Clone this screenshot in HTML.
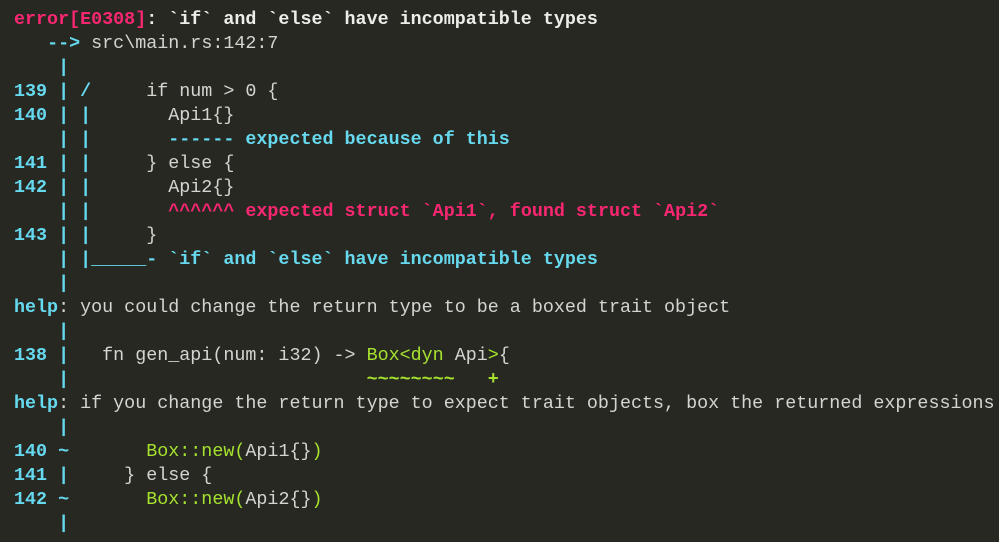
<!DOCTYPE html>
<html><head><meta charset="utf-8"><style>
html,body{margin:0;padding:0;background:#272822;width:999px;height:542px;overflow:hidden}
pre{margin:0;padding:8px 0 0 14px;font-family:"Liberation Mono",monospace;font-size:18.36px;line-height:24px;color:#d4d4d0;white-space:pre}
.r{color:#f92672;font-weight:bold}
.c{color:#66d9ef;font-weight:bold}
.w{color:#ecece8;font-weight:bold}
.g{color:#a6e22e}
.gb{color:#a6e22e;font-weight:bold}
</style></head><body><pre><span class="r">error[E0308]</span><span class="w">: `if` and `else` have incompatible types</span>
   <span class="c">--&gt;</span> src\main.rs:142:7
    <span class="c">|</span>
<span class="c">139 | /</span>     if num &gt; 0 {
<span class="c">140 | |</span>       Api1{}
    <span class="c">| |       ------ expected because of this</span>
<span class="c">141 | |</span>     } else {
<span class="c">142 | |</span>       Api2{}
    <span class="c">| |</span>       <span class="r">^^^^^^ expected struct `Api1`, found struct `Api2`</span>
<span class="c">143 | |</span>     }
    <span class="c">| |_____- `if` and `else` have incompatible types</span>
    <span class="c">|</span>
<span class="c">help</span>: you could change the return type to be a boxed trait object
    <span class="c">|</span>
<span class="c">138 |</span>   fn gen_api(num: i32) -&gt; <span class="g">Box&lt;dyn</span> Api<span class="g">&gt;</span>{
    <span class="c">|</span>                           <span class="gb">~~~~~~~~</span>   <span class="gb">+</span>
<span class="c">help</span>: if you change the return type to expect trait objects, box the returned expressions
    <span class="c">|</span>
<span class="c">140 ~</span>       <span class="g">Box::new(</span>Api1{}<span class="g">)</span>
<span class="c">141 |</span>     } else {
<span class="c">142 ~</span>       <span class="g">Box::new(</span>Api2{}<span class="g">)</span>
    <span class="c">|</span>
</pre></body></html>
